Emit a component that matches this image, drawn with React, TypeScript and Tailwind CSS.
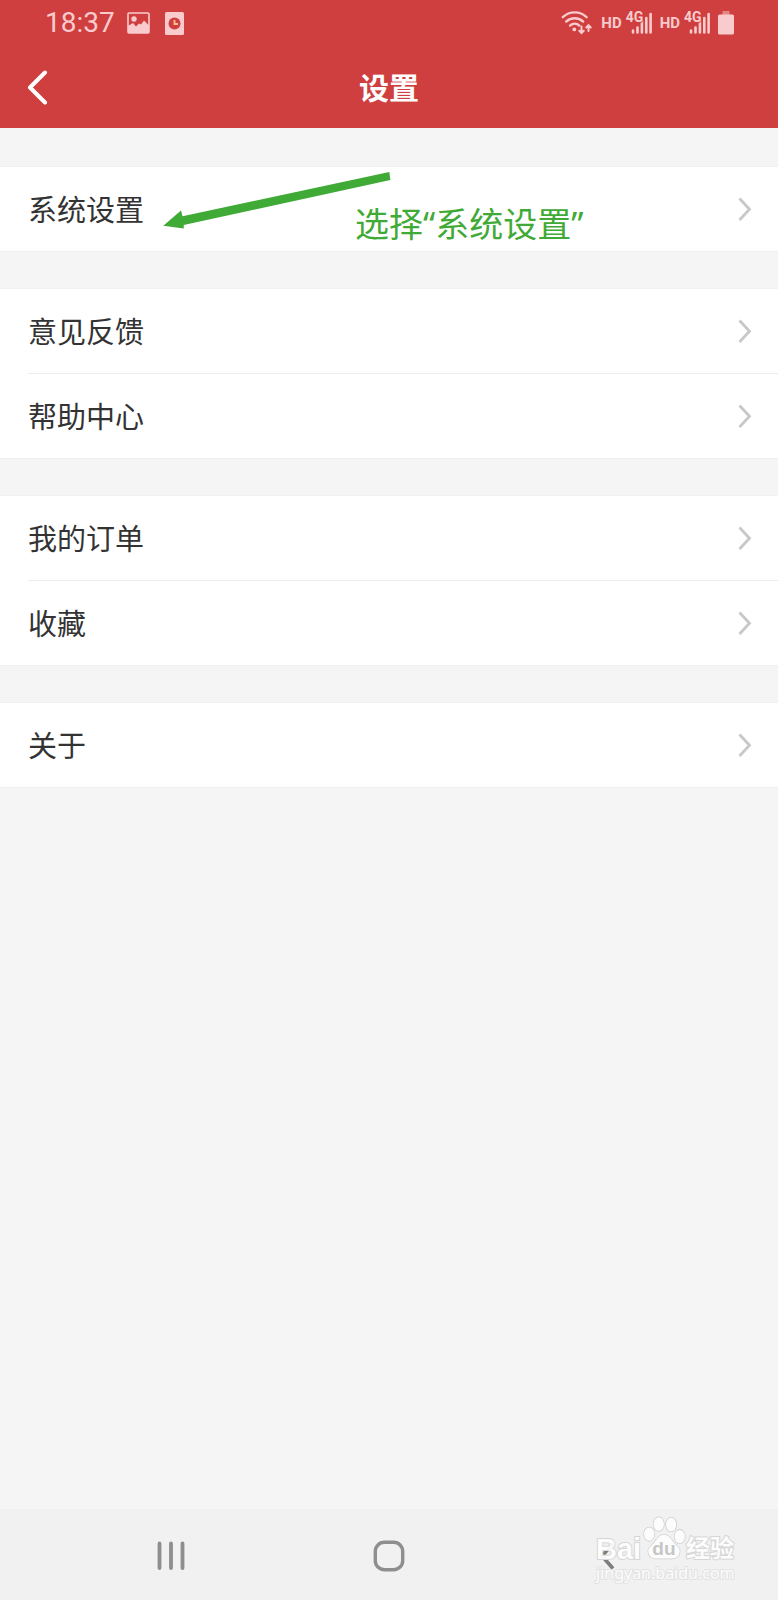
import React from "react";

const groups: string[][] = [
  ["系统设置"],
  ["意见反馈", "帮助中心"],
  ["我的订单", "收藏"],
  ["关于"],
];

function Signal() {
  return (
    <span className="flex items-center gap-1.5">
      <span className="text-[15px] leading-5 font-bold">HD</span>
      <span className="relative block h-6 w-[25px]">
        <svg className="h-6 w-[25px]" viewBox="0 0 25 24" stroke="currentColor" strokeWidth="2.6" strokeLinecap="round" aria-hidden="true">
          <path d="M5 19.500V21.500M9.500 16.500V21.500M13.900 10V21.500M18.300 7V21.500M22.600 3V21.500" />
        </svg>
        <span className="absolute -top-px -left-0.5 text-[14px] leading-[14px] font-bold [text-shadow:0_0_2px_#cf3f3f,0_1px_1px_#cf3f3f]">4G</span>
      </span>
    </span>
  );
}

function StatusBar() {
  return (
    <div className="flex h-[46px] items-center justify-between pr-11 pl-[45px] font-[Roboto,sans-serif] text-[#f9cbcd]">
      <div className="flex items-center">
        <time className="text-[28px] leading-8">18:37</time>
        <svg className="ml-3 h-[22px] w-[23px]" viewBox="0 0 23 22" aria-hidden="true">
          <rect x="1" y="1" width="21" height="20" rx="1" fill="none" stroke="currentColor" strokeWidth="1.600" />
          <circle cx="7" cy="7" r="2.700" fill="currentColor" />
          <path d="M1 14l5-3 3 3.500 3-3 2 1 3-4 5 5v7.500H1z" fill="currentColor" />
        </svg>
        <svg className="ml-[15px] h-[23px] w-[19px]" viewBox="0 0 19 23" aria-hidden="true">
          <rect width="19" height="23" rx="1.500" fill="currentColor" />
          <circle cx="9.500" cy="11.500" r="6" fill="#cf3f3f" />
          <path d="M9.500 8v4H13" fill="none" stroke="#ffc08a" strokeWidth="1.800" />
        </svg>
      </div>
      <div className="flex items-center gap-[7px]">
        <svg className="mr-0.5 h-6 w-[31px]" viewBox="0 0 31 24" fill="none" stroke="currentColor" strokeWidth="2.400" strokeLinecap="round" aria-hidden="true">
          <path d="M1.800 6.200C8.500-.2 19-.2 25.600 6.200M5.200 10.600c4.700-4.500 12.300-4.500 17 0M9 14.600c2.700-2.400 6.700-2.400 9.400 0" />
          <circle cx="13.300" cy="18.400" r="1.900" fill="currentColor" stroke="none" />
          <path d="M20.500 15.500V21.500M18.300 19.700l2.200 2.300 2.200-2.300M27.500 20V14.500M25.300 16.500l2.200-2.300 2.200 2.300" strokeWidth="2" />
        </svg>
        <Signal />
        <Signal />
        <svg className="h-6 w-4" viewBox="0 0 16 24" fill="currentColor" aria-hidden="true">
          <rect x="4.500" y="0" width="7" height="4" opacity=".5" />
          <rect x="0" y="3.500" width="16" height="20" rx="1.500" />
        </svg>
      </div>
    </div>
  );
}

function Annotation() {
  return (
    <div className="pointer-events-none absolute inset-0 text-[#3faa35]">
      <svg className="absolute top-0 left-40 h-[72px] w-60" viewBox="160 167 240 72" fill="currentColor" aria-hidden="true">
        <path d="M163.300 225.800L181 210.400L182.500 216.300L389.300 172L390.400 180L183.700 225L183.800 228.600Z" />
      </svg>
      <span className="absolute top-8 left-[355px] font-['Noto_Sans','Noto_Sans_CJK_SC',sans-serif] text-[34px] leading-[50px] whitespace-nowrap">
        选择“系统设置”
      </span>
    </div>
  );
}

function Watermark() {
  return (
    <div className="pointer-events-none absolute top-1 right-11 w-[138px] text-white/90">
      <div className="flex h-[52px] items-end justify-between [-webkit-text-stroke:2px_#d6d6d6] [paint-order:stroke]">
        <span className="font-['Liberation_Sans',sans-serif] text-[29px] leading-8 font-bold">Bai</span>
        <svg className="mb-1.5 h-[42px] w-[42px] overflow-visible" viewBox="0 0 44 42" fill="#fcfcfc" stroke="#cfcfcf" strokeWidth="1.600" aria-hidden="true">
          <ellipse cx="6.500" cy="17" rx="5.400" ry="7" />
          <ellipse cx="16.500" cy="6.500" rx="5.400" ry="7.200" />
          <ellipse cx="29.500" cy="7" rx="5.400" ry="7.200" />
          <ellipse cx="38.500" cy="19.500" rx="5.400" ry="7" />
          <path d="M22 17.500c5 0 7 4 10 8 4 5 8 6 6 12-2 6-8 5-16 5s-14 1-16-5c-2-6 2-7 6-12 3-4 5-8 10-8z" />
          <text x="22" y="39" textAnchor="middle" fill="#c6c6c6" stroke="none" className="font-['Liberation_Sans',sans-serif] text-[20px] font-bold">du</text>
        </svg>
        <span className="font-['Noto_Sans_CJK_SC',sans-serif] text-2xl leading-9 font-bold">经验</span>
      </div>
      <div className="text-center font-['Noto_Sans',sans-serif] text-[16px] leading-4 [-webkit-text-stroke:2px_#e2e2e2] [paint-order:stroke]">jingyan.baidu.com</div>
    </div>
  );
}

export default function App() {
  return (
    <div className="flex min-h-screen flex-col bg-[#f5f5f5] font-['Noto_Sans_CJK_SC',sans-serif] text-[#333]">
      <header className="bg-[#cf3f3f] text-white">
        <StatusBar />
        <div className="grid h-[82px] grid-cols-[80px_1fr_80px] items-center">
          <button type="button" aria-label="返回" className="flex h-full items-center pl-[26px]">
            <svg className="h-9 w-6" viewBox="0 0 24 36" fill="none" stroke="currentColor" strokeWidth="4" strokeLinecap="round" strokeLinejoin="round" aria-hidden="true">
              <path d="M19 3.500L4 18.500L19 33.500" />
            </svg>
          </button>
          <h1 className="pb-0.5 text-center text-[30px] leading-10 font-bold">设置</h1>
        </div>
      </header>

      <main className="flex flex-1 flex-col gap-[38px] pt-[39px]">
        {groups.map((items, index) => (
          <section key={items[0]} className="relative bg-white shadow-[0_0_0_1px_#f0f0f0]">
            {items.map((label, i) => (
              <React.Fragment key={label}>
                {i > 0 && <hr className="ml-7 border-t border-[#ececec]" />}
                <button type="button" className="flex h-[84px] w-full items-center justify-between pr-[26px] pl-7 text-left">
                  <span className="pb-0.5 text-[29px] leading-10">{label}</span>
                  <svg className="h-6 w-[14px] text-[#c8c8c8]" viewBox="0 0 14 24" fill="none" stroke="currentColor" strokeWidth="2.800" aria-hidden="true">
                    <path d="M1.500 1.500L11.500 12.200L1.500 23" />
                  </svg>
                </button>
              </React.Fragment>
            ))}
            {index === 0 && <Annotation />}
          </section>
        ))}
      </main>

      <nav className="relative grid h-[91px] grid-cols-3 bg-[#f1f1f1] px-[62px] pt-0.5 text-[#8e8e8e]">
        <button type="button" aria-label="最近任务" className="flex items-center justify-center">
          <svg className="h-[30px] w-[30px]" viewBox="0 0 30 30" stroke="currentColor" strokeWidth="3.800" strokeLinecap="round" aria-hidden="true">
            <path d="M3.500 2.500V27M15 2.500V27M26.500 2.500V27" />
          </svg>
        </button>
        <button type="button" aria-label="主屏幕" className="flex items-center justify-center">
          <svg className="h-8 w-8" viewBox="0 0 32 32" fill="none" stroke="currentColor" strokeWidth="3.400" aria-hidden="true">
            <rect x="2.300" y="2.300" width="27.400" height="27.400" rx="9" />
          </svg>
        </button>
        <button type="button" aria-label="后退" className="flex items-center justify-center">
          <svg className="h-7 w-4 text-[#7d7d7d]" viewBox="0 0 16 28" fill="none" stroke="currentColor" strokeWidth="3.600" aria-hidden="true">
            <path d="M14 1.500L3 14L14 26.500" />
          </svg>
        </button>
        <Watermark />
      </nav>
    </div>
  );
}
